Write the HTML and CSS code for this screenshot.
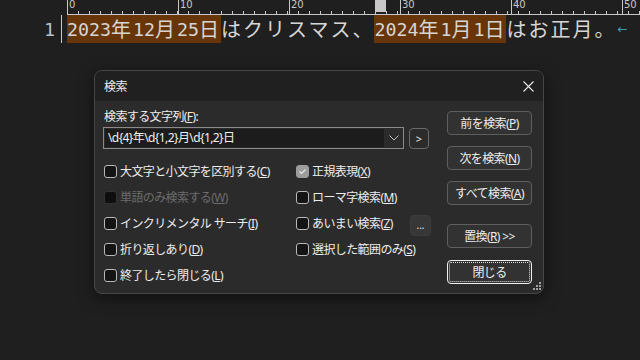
FILE: index.html
```html
<!DOCTYPE html>
<html lang="ja">
<head>
    <meta charset="UTF-8">
    <title>検索</title>
    <link rel="stylesheet" href="styles.css">
</head>
<body>
    <div class="editor">
        <div class="ruler-row">
            <div class="ruler">
                <span class="mark">0</span><span class="mark">10</span><span class="mark">20</span><span class="mark">30</span><span class="mark">40</span><span class="mark">50</span>
                <span class="ruler-cursor"></span>
            </div>
        </div>
        <div class="line">
            <div class="gutter"><span class="lineno">1</span></div>
            <div class="text"><span class="hl"><span class="an">2023</span><span class="jp">年</span><span class="an">12</span><span class="jp">月</span><span class="an">25</span><span class="jp">日</span></span><span class="jp">はクリスマス、</span><span class="hl"><span class="an">2024</span><span class="jp">年</span><span class="an">1</span><span class="jp">月</span><span class="an">1</span><span class="jp">日</span></span><span class="jp">はお正月。</span><span class="eol">←</span></div>
        </div>
    </div>

    <div class="dialog">
        <div class="titlebar">
            <span class="title">検索</span>
            <svg class="close" width="11" height="11" viewBox="0 0 11 11"><path d="M0.5 0.5 L10.5 10.5 M10.5 0.5 L0.5 10.5" stroke="#e8e8e8" stroke-width="1.1" fill="none"/></svg>
        </div>
        <div class="dialog-body">
            <div class="form-col">
                <label class="field-label">検索する文字列(<u>F</u>):</label>
                <div class="find-row">
                    <div class="combo">
                        <span class="combo-text">\d{4}年\d{1,2}月\d{1,2}日</span>
                        <span class="combo-arrow">
                            <svg width="10" height="6" viewBox="0 0 10 6"><path d="M0.5 0.5 L5 5 L9.5 0.5" stroke="#bdbdbd" stroke-width="1" fill="none"/></svg>
                        </span>
                    </div>
                    <button class="small-btn">&gt;</button>
                </div>
                <div class="options">
                    <div class="opt"><span class="box"></span><span>大文字と小文字を区別する(<u>C</u>)</span></div>
                    <div class="opt"><span class="box checked"><svg width="11" height="11" viewBox="0 0 11 11"><path d="M2.5 5.5 L4.5 7.5 L8.5 3.5" stroke="#e6e6e6" stroke-width="1.2" fill="none"/></svg></span><span>正規表現(<u>X</u>)</span></div>
                    <div class="opt disabled"><span class="box"></span><span>単語のみ検索する(<u>W</u>)</span></div>
                    <div class="opt"><span class="box"></span><span>ローマ字検索(<u>M</u>)</span></div>
                    <div class="opt"><span class="box"></span><span>インクリメンタル サーチ(<u>I</u>)</span></div>
                    <div class="opt"><span class="box"></span><span>あいまい検索(<u>Z</u>)</span><button class="small-btn more">...</button></div>
                    <div class="opt"><span class="box"></span><span>折り返しあり(<u>D</u>)</span></div>
                    <div class="opt"><span class="box"></span><span>選択した範囲のみ(<u>S</u>)</span></div>
                    <div class="opt"><span class="box"></span><span>終了したら閉じる(<u>L</u>)</span></div>
                </div>
            </div>
            <div class="button-col">
                <button class="btn">前を検索(<u>P</u>)</button>
                <button class="btn">次を検索(<u>N</u>)</button>
                <button class="btn">すべて検索(<u>A</u>)</button>
                <button class="btn replace">置換(<u>R</u>) &gt;&gt;</button>
                <button class="btn default">閉じる</button>
            </div>
        </div>
        <svg class="grip" width="9" height="9" viewBox="0 0 9 9">
            <rect x="7" y="0" width="2" height="2" fill="#a0a0a0"/>
            <rect x="4" y="3" width="2" height="2" fill="#a0a0a0"/>
            <rect x="7" y="3" width="2" height="2" fill="#a0a0a0"/>
            <rect x="1" y="6" width="2" height="2" fill="#a0a0a0"/>
            <rect x="4" y="6" width="2" height="2" fill="#a0a0a0"/>
            <rect x="7" y="6" width="2" height="2" fill="#a0a0a0"/>
        </svg>
    </div>
</body>
</html>
```

FILE: styles.css
```css
body {
    margin: 0;
    width: 640px;
    height: 360px;
    overflow: hidden;
    background-color: #1f1f1f;
    position: relative;
    font-family: "Noto Sans", "Noto Sans CJK JP", sans-serif;
}

/* editor */
.ruler-row {
    height: 15px;
    padding-left: 67px;
    overflow: hidden;
}

.ruler {
    position: relative;
    display: flex;
    height: 14px;
    border-bottom: 1px solid #c8c8c8;
    background-image: repeating-linear-gradient(to right, #c8c8c8 0 1px, transparent 1px 11px);
    background-size: 100% 3px;
    background-position: left bottom;
    background-repeat: no-repeat;
}

.mark {
    flex: 0 0 109px;
    border-left: 1px solid #c8c8c8;
    color: #c8c8c8;
    font-family: "DejaVu Sans", sans-serif;
    font-size: 10px;
    line-height: 10px;
    padding-left: 1px;
}

.ruler-cursor {
    position: absolute;
    left: 308px;
    top: 0;
    width: 11px;
    height: 12px;
    background-color: #c8c8c8;
}

.line {
    display: flex;
    height: 28px;
}

.gutter {
    width: 62px;
    display: flex;
    justify-content: flex-end;
    align-items: center;
    border-right: 1px solid #c8c8c8;
    box-sizing: border-box;
    margin-right: 4px;
}

.lineno {
    color: #b4c2d0;
    font-family: "DejaVu Sans Mono", monospace;
    font-size: 18.3px;
    padding-right: 6px;
}

.text {
    display: flex;
    align-items: center;
    color: #d6d6d6;
    margin-left: 1px;
}

.hl {
    display: flex;
    align-items: center;
    height: 28px;
    background-color: #673507;
}

.an {
    font-family: "DejaVu Sans Mono", monospace;
    font-size: 18.27px;
}

.jp {
    font-family: "Noto Sans CJK JP", sans-serif;
    font-size: 20px;
    letter-spacing: 2px;
    line-height: 28px;
}

.eol {
    color: #3a9fb2;
    font-family: "DejaVu Sans", sans-serif;
    font-size: 12px;
    padding-left: 1px;
}

/* dialog */
.dialog {
    position: absolute;
    left: 94px;
    top: 70px;
    width: 450px;
    height: 224px;
    box-sizing: border-box;
    border: 1px solid #464646;
    border-radius: 8px;
    background-color: #2b2b2b;
    overflow: hidden;
    color: #ededed;
    font-size: 12px;
    letter-spacing: -0.6px;
    box-shadow: 0 4px 16px rgba(0, 0, 0, 0.5);
}

.titlebar {
    height: 30px;
    background-color: #202020;
    display: flex;
    align-items: center;
    justify-content: space-between;
    padding: 0 9px 0 9px;
}

.dialog-body {
    display: flex;
    padding: 8px 10px 0 8px;
}

.form-col {
    width: 328px;
    display: flex;
    flex-direction: column;
}

.field-label {
    line-height: 16px;
    margin-left: 1px;
}

.find-row {
    display: flex;
    align-items: center;
    gap: 5px;
    margin-top: 2px;
}

.combo {
    width: 301px;
    height: 22px;
    box-sizing: border-box;
    border: 1px solid #8a8a8a;
    display: flex;
    background-color: #2b2b2b;
}

.combo-text {
    flex: 1;
    margin: 1px;
    padding-left: 3px;
    background-color: #1c1c1c;
    line-height: 18px;
    color: #f0f0f0;
}

.combo-arrow {
    width: 18px;
    display: flex;
    align-items: center;
    justify-content: center;
}

.small-btn {
    width: 20px;
    height: 21px;
    padding: 0;
    border: 1px solid #6a6a6a;
    border-radius: 4px;
    background-color: #2b2b2b;
    color: #e8e8e8;
    font-family: "Noto Sans", sans-serif;
    font-size: 11px;
}

.options {
    display: grid;
    grid-template-columns: 192px 135px;
    grid-auto-rows: 26px;
    margin-top: 9px;
    padding-left: 1px;
}

.opt {
    display: flex;
    align-items: center;
    gap: 3px;
    white-space: nowrap;
}

.opt.disabled {
    color: #6b6b6b;
}

.box {
    width: 13px;
    height: 13px;
    box-sizing: border-box;
    border: 1px solid #b8b8b8;
    border-radius: 3px;
    background-color: #141414;
    display: flex;
    align-items: center;
    justify-content: center;
}

.disabled .box {
    border-color: #333;
    background-color: #0e0e0e;
}

.box.checked {
    border-color: #9c9c9c;
    background-color: #9c9c9c;
}

.more {
    margin-left: auto;
    margin-top: 4px;
    width: 21px;
    border-color: #3c3c3c;
    background-color: #373737;
    font-size: 10px;
}

.button-col {
    display: flex;
    flex-direction: column;
    gap: 11px;
    margin-left: 16px;
    margin-top: 2px;
}

.btn {
    width: 85px;
    height: 24px;
    padding: 0;
    border: 1px solid #5e5e5e;
    border-radius: 4px;
    background-color: #323232;
    color: #ededed;
    font-family: "Noto Sans", "Noto Sans CJK JP", sans-serif;
    font-size: 12px;
    letter-spacing: -0.6px;
}

.btn.replace {
    margin-top: 8px;
}

.btn.default {
    margin-top: 1px;
    border-color: #f0f0f0;
    outline: 1px dotted #e0e0e0;
    outline-offset: -3px;
}

.grip {
    position: absolute;
    right: 2px;
    bottom: 2px;
}
```
